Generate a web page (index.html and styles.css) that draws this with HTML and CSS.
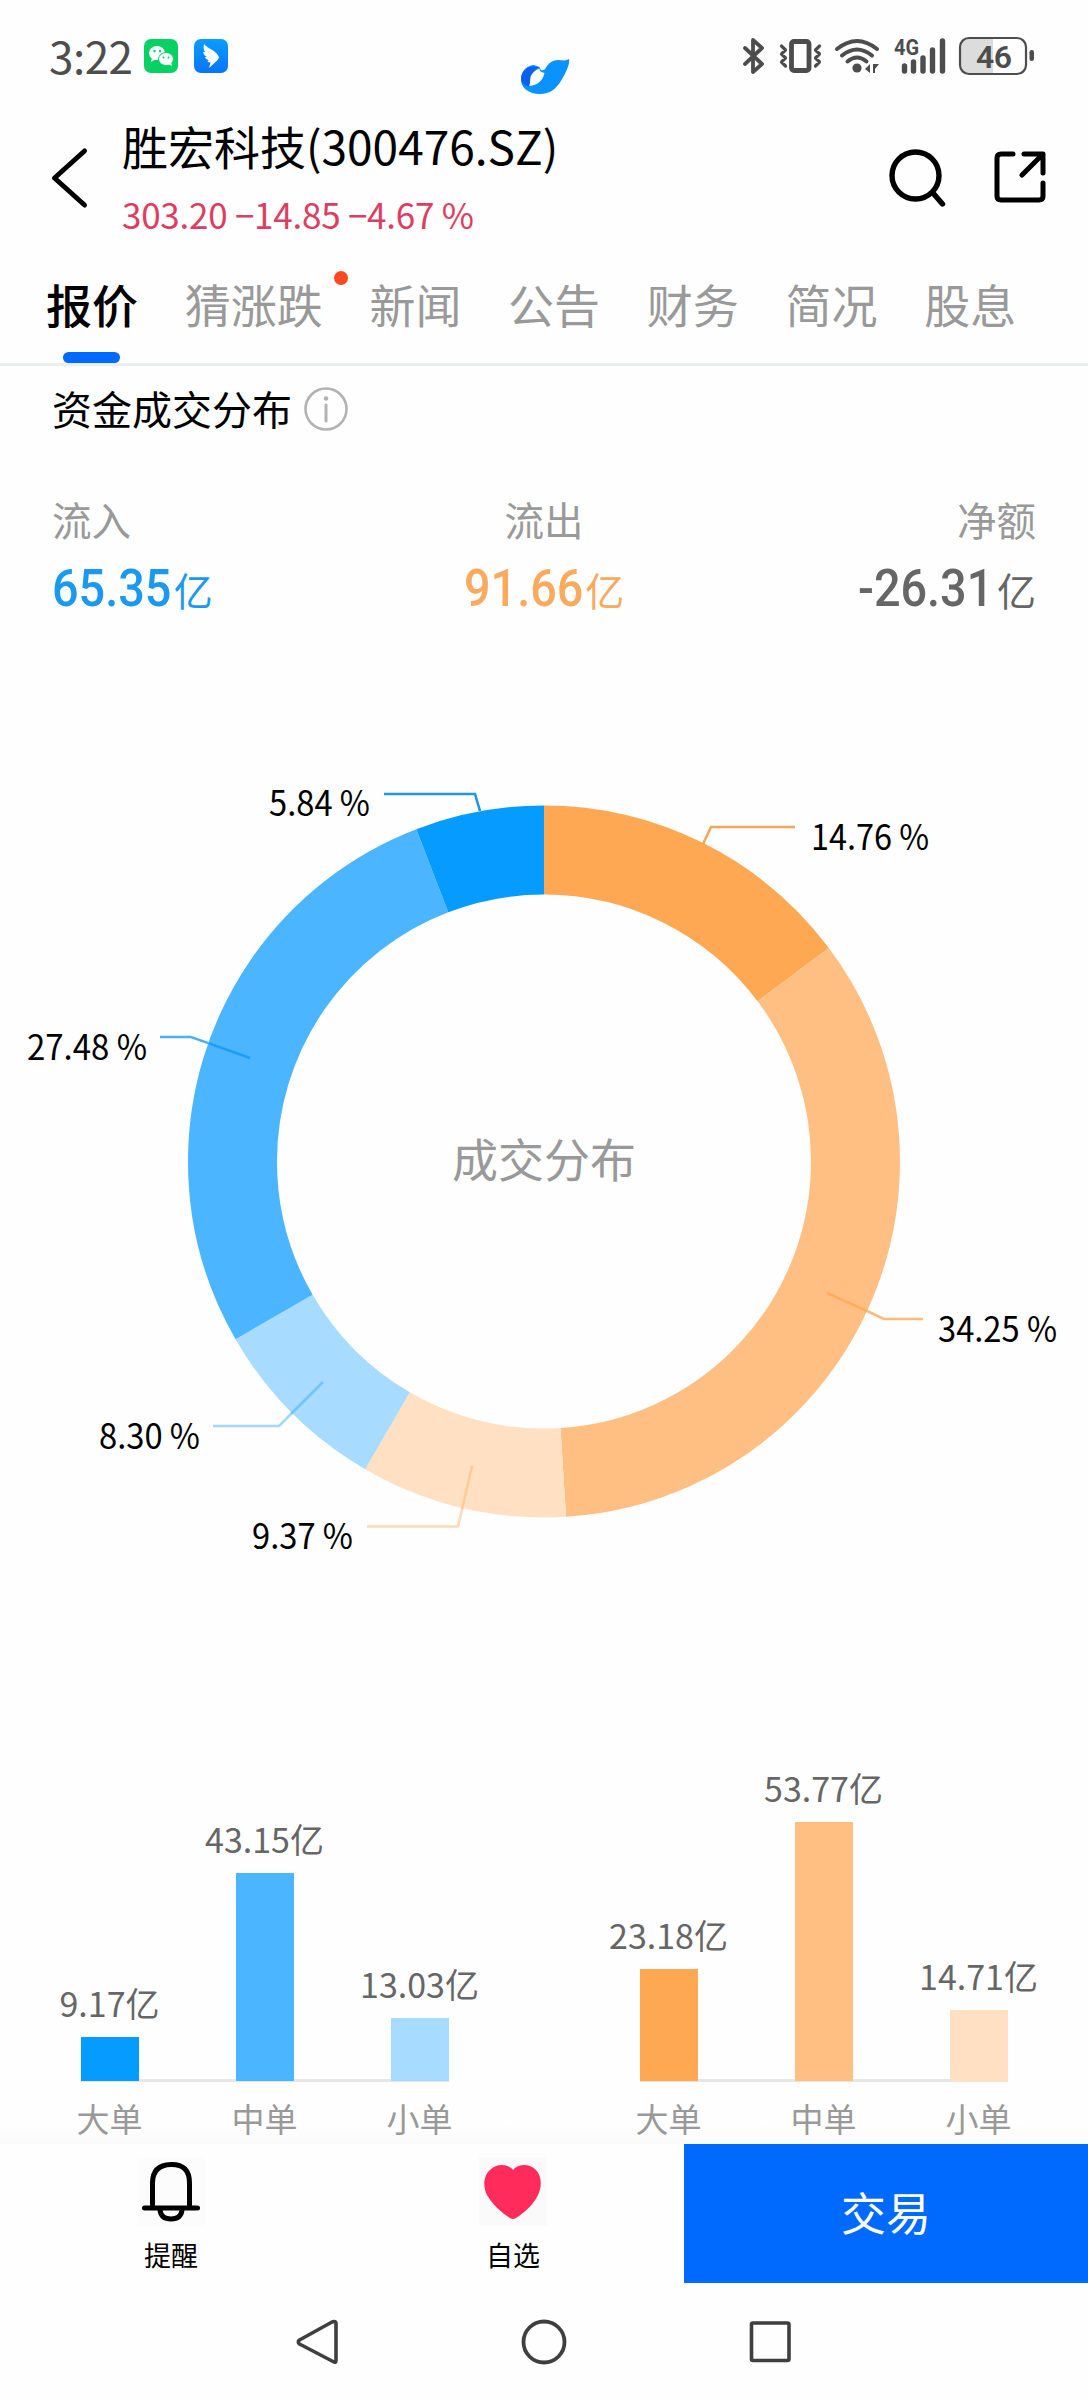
FILE: index.html
```html
<!DOCTYPE html>
<html lang="zh-CN">
	<head>
		<meta charset="utf-8" />
		<title>胜宏科技(300476.SZ)</title>
		<link rel="stylesheet" href="styles.css">
	</head>
	<body>
		<!--状态栏-->
		<div class="status">
			<span class="time">3:22</span>
			<svg class="app" width="34" height="34" viewBox="0 0 34 34">
				<rect width="34" height="34" rx="7" fill="#06d162"/>
				<ellipse cx="13" cy="14" rx="8" ry="7" fill="#fff"/>
				<path d="M8 18l-1 5 5-3z" fill="#fff"/>
				<ellipse cx="22" cy="20" rx="7.5" ry="6.5" fill="#fff" stroke="#06d162" stroke-width="1"/>
				<path d="M24 25l4 2-1-4z" fill="#fff"/>
				<g fill="#06d162"><circle cx="10.500" cy="12" r="1.200"/><circle cx="16" cy="12" r="1.200"/><circle cx="19.500" cy="18.500" r="1"/><circle cx="24.500" cy="18.500" r="1"/></g>
			</svg>
			<svg class="app ding" width="34" height="34" viewBox="0 0 34 34">
				<defs><linearGradient id="dg" x2="0" y2="1"><stop stop-color="#0a9dff"/><stop offset="1" stop-color="#0674ff"/></linearGradient></defs>
				<rect width="34" height="34" rx="7" fill="url(#dg)"/>
				<path d="M10 5c4 4.500 9 5.500 11.500 8.500 2 2 3 3 3.500 5-1 2.500-3 4-5 6l-5 4.500 1.500-5.500-3-.5 1-2c-2-.5-3-1.500-3.500-3l2-.2c-2-1-3.500-2.500-4-4.500l2-.2C9.500 11 9.300 8 10 5z" fill="#fff"/>
			</svg>
			<div class="status-right">
				<svg width="26" height="38" viewBox="0 0 26 38"><path d="M4 11l17 16-9 8V3l9 8L4 27" fill="none" stroke="#4d4d4d" stroke-width="3.800" stroke-linejoin="round" stroke-linecap="round"/></svg>
				<svg class="vib" width="44" height="38" viewBox="0 0 44 38"><g fill="none" stroke="#4d4d4d" stroke-linejoin="round" stroke-linecap="round"><rect x="12.500" y="4.500" width="17.500" height="29" rx="2.500" stroke-width="4.800"/><path d="M2.500 9l4 4-4 4 4 4-4 4 4 4M40.500 9l-4 4 4 4-4 4 4 4-4 4" stroke-width="3.200"/></g></svg>
				<svg class="wifi" width="46" height="38" viewBox="0 0 46 38"><g fill="none" stroke="#4d4d4d" stroke-width="4" stroke-linecap="round"><path d="M3 12q20-16 40 0M8 18.500q15-12 30 0M13.500 24.500q9.500-8 19 0"/></g><circle cx="23" cy="31" r="4.600" fill="#4d4d4d"/><path d="M36 27v9l-5-4zM39 27v9h2v-4l4-5z" fill="#4d4d4d"/></svg>
				<svg class="signal" width="53" height="38" viewBox="0 0 53 38"><text x="0" y="18" class="net" textLength="25" lengthAdjust="spacingAndGlyphs">4G</text><path d="M10.500 29v5M19.500 25v9M29 21v13M38.500 13v21M48.500 4v30" stroke="#4d4d4d" stroke-width="5.400" stroke-linecap="round"/></svg>
				<svg class="battery" width="76" height="38" viewBox="0 0 76 38"><path d="M10 2h24v34H10q-8 0-8-8V10q0-8 8-8z" fill="#dcdcdc"/><rect x="1" y="1" width="66" height="36" rx="9" fill="none" stroke="#4d4d4d" stroke-width="2.200"/><rect x="70.500" y="13" width="4.500" height="11" rx="2.200" fill="#4d4d4d"/><text x="17" y="31" class="pct" textLength="36">46</text></svg>
			</div>
			<svg class="bird" width="50" height="38" viewBox="0 0 50 38">
				<path d="M1 20C2 12 8 7 14 7l5.500 2L21 12q3 1 4.500-1.500C28 6 32 2 38 2q4 0 7 .5L49 1c1 4-2 12-7.500 21C36 31 30 36 20 36 8 36 0 29 1 20z" fill="#0a92ff"/>
				<path d="M1 20C2 11 10 6 19 9.500 14 11 10 17 10 28.500 5 28 1 25 1 20z" fill="#0a61e8"/>
				<path d="M19.500 10.500q-.5 3.500 5 4.500C23 22 18 27.500 9 28c2-3 .5-7 2-10.500q3-5 8.500-7z" fill="#fff"/>
			</svg>
		</div>
		<!--股票标题-->
		<div class="header">
			<svg class="back" width="40" height="64" viewBox="0 0 40 64"><path d="M35.500 5L5.500 32l30 27" fill="none" stroke="#000" stroke-width="5" stroke-linecap="round" stroke-linejoin="round"/></svg>
			<div class="stock">
				<h1>胜宏科技(300476.SZ)</h1>
				<p>303.20 −14.85 −4.67 %</p>
			</div>
			<svg class="search" width="60" height="60" viewBox="0 0 60 60"><g fill="none" stroke="#000" stroke-width="5.400" stroke-linecap="round"><circle cx="27.500" cy="27.500" r="23.500"/><path d="M45 45l9.500 11"/></g></svg>
			<svg class="share" width="52" height="54" viewBox="0 0 52 54"><path d="M19 4H7q-4 0-4 4v38q0 4 4 4h38q4 0 4-4V33M30 4h19v19M48 5L28 25" fill="none" stroke="#000" stroke-width="5" stroke-linecap="round" stroke-linejoin="round"/></svg>
		</div>
		<!--导航标签-->
		<ul class="tabs">
			<li class="current">报价</li>
			<li class="new">猜涨跌</li>
			<li>新闻</li>
			<li>公告</li>
			<li>财务</li>
			<li>简况</li>
			<li>股息</li>
		</ul>
		<!--资金成交分布-->
		<div class="flow">
			<div class="flow-title">
				<h2>资金成交分布</h2>
				<svg width="44" height="44" viewBox="0 0 44 44"><circle cx="22" cy="22" r="20.500" fill="none" stroke="#b3b3b3" stroke-width="2.600"/><circle cx="22" cy="11.500" r="2.300" fill="#b3b3b3"/><path d="M22 18v16" stroke="#b3b3b3" stroke-width="3" stroke-linecap="round"/></svg>
			</div>
			<div class="totals">
				<div class="in"><p>流入</p><b><i>65.35</i><span>亿</span></b></div>
				<div class="out"><p>流出</p><b><i>91.66</i><span>亿</span></b></div>
				<div class="net-sum"><p>净额</p><b><i>-26.31</i><span>亿</span></b></div>
			</div>
		</div>
		<!--环形图-->
		<svg class="donut" width="1088" height="820" viewBox="0 760 1088 820">
			<g class="ring" transform="rotate(-90 544 1161.5)" fill="none" stroke-width="89">
				<circle cx="544" cy="1161.500" r="311.500" pathLength="100" stroke="#ffa853" stroke-dasharray="14.760 100"/>
				<circle cx="544" cy="1161.500" r="311.500" pathLength="100" stroke="#ffbf83" stroke-dasharray="34.250 100" stroke-dashoffset="-14.760"/>
				<circle cx="544" cy="1161.500" r="311.500" pathLength="100" stroke="#ffe0c3" stroke-dasharray="9.370 100" stroke-dashoffset="-49.010"/>
				<circle cx="544" cy="1161.500" r="311.500" pathLength="100" stroke="#a7dbff" stroke-dasharray="8.300 100" stroke-dashoffset="-58.380"/>
				<circle cx="544" cy="1161.500" r="311.500" pathLength="100" stroke="#4cb5ff" stroke-dasharray="27.480 100" stroke-dashoffset="-66.680"/>
				<circle cx="544" cy="1161.500" r="311.500" pathLength="100" stroke="#059bff" stroke-dasharray="5.840 100" stroke-dashoffset="-94.160"/>
			</g>
			<g fill="none" stroke-width="2.600">
				<path d="M384 794h91l5 17" stroke="#2296e0"/>
				<path d="M160 1037h31l18 6.400" stroke="#4cb0f2"/><path d="M209 1043.400l41 14.600" stroke="#1c9df5"/>
				<path d="M213 1426h66l12-12" stroke="#a2d8fa"/><path d="M291 1414l32-32" stroke="#72c3fa"/>
				<path d="M367 1526.500h91l4-17" stroke="#fcdab9"/><path d="M462 1509.500l10-43.500" stroke="#fdcb98"/>
				<path d="M795 827h-84l-8 17" stroke="#f0a75c"/>
				<path d="M923 1319h-39l-17-8" stroke="#fbbb7c"/><path d="M867 1311l-40-18" stroke="#ffac5c"/>
			</g>
			<g class="pcts">
				<text x="269" y="816" textLength="101" lengthAdjust="spacingAndGlyphs">5.84 %</text>
				<text x="811" y="849.500" textLength="118" lengthAdjust="spacingAndGlyphs">14.76 %</text>
				<text x="27" y="1059.500" textLength="120" lengthAdjust="spacingAndGlyphs">27.48 %</text>
				<text x="938" y="1341.500" textLength="119" lengthAdjust="spacingAndGlyphs">34.25 %</text>
				<text x="99" y="1448.500" textLength="101" lengthAdjust="spacingAndGlyphs">8.30 %</text>
				<text x="252" y="1548.500" textLength="101" lengthAdjust="spacingAndGlyphs">9.37 %</text>
			</g>
			<text class="center" x="544" y="1177">成交分布</text>
		</svg>
		<!--柱状图-->
		<div class="bars">
			<div class="chart">
				<div class="col"><span>9.17亿</span><div class="bar b1" style="height: 44px;"></div></div>
				<div class="col"><span>43.15亿</span><div class="bar b2" style="height: 208px;"></div></div>
				<div class="col"><span>13.03亿</span><div class="bar b3" style="height: 63px;"></div></div>
				<em>大单</em><em>中单</em><em>小单</em>
			</div>
			<div class="chart">
				<div class="col"><span>23.18亿</span><div class="bar o1" style="height: 112px;"></div></div>
				<div class="col"><span>53.77亿</span><div class="bar o2" style="height: 259px;"></div></div>
				<div class="col"><span>14.71亿</span><div class="bar o3" style="height: 71px;"></div></div>
				<em>大单</em><em>中单</em><em>小单</em>
			</div>
		</div>
		<!--底部操作栏-->
		<div class="footer">
			<div class="act">
				<svg width="68" height="69" viewBox="0 0 68 69"><rect width="68" height="69" fill="#fcfcfc"/><g fill="none" stroke="#000" stroke-linecap="round"><path d="M15.500 48V26q0-18 18.500-18.500T52.500 26v22" stroke-width="5"/><path d="M7.500 51h53" stroke-width="5"/><path d="M23 53q1 9 11 9t11-9" stroke-width="5"/></g></svg>
				<span>提醒</span>
			</div>
			<div class="act">
				<svg width="68" height="69" viewBox="0 0 68 69"><rect width="68" height="69" fill="#fafafa"/><path d="M34 13C29 7 18 6 11 13c-7 6-7 17-3 25 5 9 14 17 23 23q3 2 6 0c9-6 18-14 22-23 4-8 4-19-2-25-7-7-18-6-23 0z" fill="#ff2c5b"/></svg>
				<span>自选</span>
			</div>
			<div class="trade">交易</div>
		</div>
		<!--系统导航-->
		<div class="sysnav">
			<svg width="46" height="48" viewBox="0 0 46 48"><path d="M39 3.500q2 0 2 2v37q0 3-3 1L4.500 26q-2.500-2 0-4L37 4z" fill="none" stroke="#3f3f3f" stroke-width="3.600" stroke-linejoin="round"/></svg>
			<svg width="46" height="48" viewBox="0 0 46 48"><circle cx="23" cy="24" r="20.500" fill="none" stroke="#3f3f3f" stroke-width="3.800"/></svg>
			<svg width="46" height="48" viewBox="0 0 46 48"><rect x="4.500" y="5" width="37.500" height="37.500" rx="1.500" fill="none" stroke="#3f3f3f" stroke-width="3.600"/></svg>
		</div>
	</body>
</html>
```
FILE: styles.css
```css
*{margin: 0;padding: 0;box-sizing: border-box;}
ul,li{list-style: none;}
i,em{font-style: normal;}
svg{display: block;flex: none;overflow: visible;}
body{width: 1088px;height: 2400px;overflow: hidden;background: #fefefe;color: #000;font-family: "Noto Sans CJK SC",sans-serif;display: flex;flex-direction: column;}
/*状态栏*/
.status{position: relative;height: 112px;padding: 37px 53px 0 49px;display: flex;align-items: flex-start;color: #4d4d4d;}
.time{width: 95px;margin-top: -1px;font-size: 44px;line-height: 38px;letter-spacing: -.500px;white-space: nowrap;}
.app{margin-top: 2px;}
.ding{margin-left: 16px;}
.status-right{margin-left: auto;display: flex;}
.vib{margin-left: 12px;}
.wifi{margin-left: 11px;}
.signal{margin-left: 14px;}
.battery{margin-left: 12px;}
.net{font: 700 22px Roboto,sans-serif;fill: #4d4d4d;}
.pct{font: 600 32px Roboto,sans-serif;fill: #4d4d4d;}
.bird{position: absolute;left: 520px;top: 58px;}
/*股票标题*/
.header{height: 144px;display: flex;padding: 0 42px 0 49px;}
.back{margin-top: 34px;}
.stock{width: 500px;margin: -2px 0 0 33px;white-space: nowrap;}
.stock h1{font-size: 46px;font-weight: 400;line-height: 70px;}
.stock p{font-size: 35px;line-height: 50px;margin-top: 9px;letter-spacing: -.250px;color: #dc3e63;}
.search{margin: 36px 0 0 266px;}
.share{margin: 38px 0 0 auto;}
/*导航标签*/
.tabs{height: 110px;display: flex;gap: 46.700px;padding: 13px 0 0 46px;border-bottom: 3px solid #ebeeed;font-size: 46px;line-height: 68px;color: #999;}
.tabs li{position: relative;white-space: nowrap;}
.tabs .current{color: #000;font-weight: 500;}
.tabs .current::after{content: "";position: absolute;left: 17px;bottom: 0;width: 57px;height: 11px;border-radius: 6px;background: #006aff;}
.tabs .new::after{content: "";position: absolute;right: -25px;top: 2px;width: 14px;height: 14px;border-radius: 50%;background: #fb4a22;}
/*资金成交分布*/
.flow{height: 394px;padding: 21px 52px 0;}
.flow-title{height: 44px;display: flex;align-items: center;gap: 12px;}
.flow-title h2{margin-top: -2px;font-size: 40px;font-weight: 400;line-height: 44px;}
.totals{display: grid;grid-template-columns: repeat(3,1fr);margin-top: 60px;}
.totals p{font-size: 39.500px;line-height: 56px;color: #999;}
.totals b{display: block;font: 500 52px/58px Roboto,"Noto Sans CJK SC",sans-serif;margin-top: 13px;white-space: nowrap;}
/*数字压窄*/
.totals i{display: inline-block;transform: scaleX(.9);transform-origin: 0 0;margin-right: -11px;}
.totals span{font: 400 39px/40px "Noto Sans CJK SC",sans-serif;}
.in b{color: #1a99ef;}
.out{text-align: center;}
.out b{color: #f8aa5f;}
.net-sum{text-align: right;}
.net-sum b{color: #666;}
/*环形图*/
.pcts{font-size: 35px;}
.center{font-size: 46px;fill: #999;text-anchor: middle;}
/*柱状图*/
.bars{height: 564px;display: flex;gap: 94px;padding: 0 0 0 32px;background: linear-gradient(#fefefe 96.500%,#fafafa);}
.chart{width: 465px;display: grid;grid-template-columns: repeat(3,155px);grid-template-rows: 501px 63px;text-align: center;position: relative;}
.chart::before{content: "";position: absolute;left: 49px;top: 499px;width: 368px;height: 3px;background: #e6e6e6;}
.col{position: relative;display: flex;flex-direction: column;justify-content: flex-end;align-items: center;}
.col span{font-size: 34px;line-height: 50px;margin-bottom: 9px;color: #666;white-space: nowrap;}
.bar{width: 58px;}
.b1{background: #059bff;}
.b2{background: #4cb5ff;}
.b3{background: #a7dbff;}
.o1{background: #ffa853;}
.o2{background: #ffbf83;}
.o3{background: #ffe0c3;}
.chart em{font-size: 33px;line-height: 48px;margin-top: 13px;color: #999;}
/*底部操作栏*/
.footer{height: 139px;display: flex;}
.act{width: 342px;padding-top: 13px;display: flex;flex-direction: column;align-items: center;font-size: 27px;line-height: 40px;}
.act span{margin-top: 9px;}
.trade{flex: 1;background: #006aff;color: #fff;font-size: 45px;line-height: 136px;text-align: center;}
/*系统导航*/
.sysnav{height: 117px;display: flex;justify-content: center;gap: 180px;padding-top: 35px;}
```
